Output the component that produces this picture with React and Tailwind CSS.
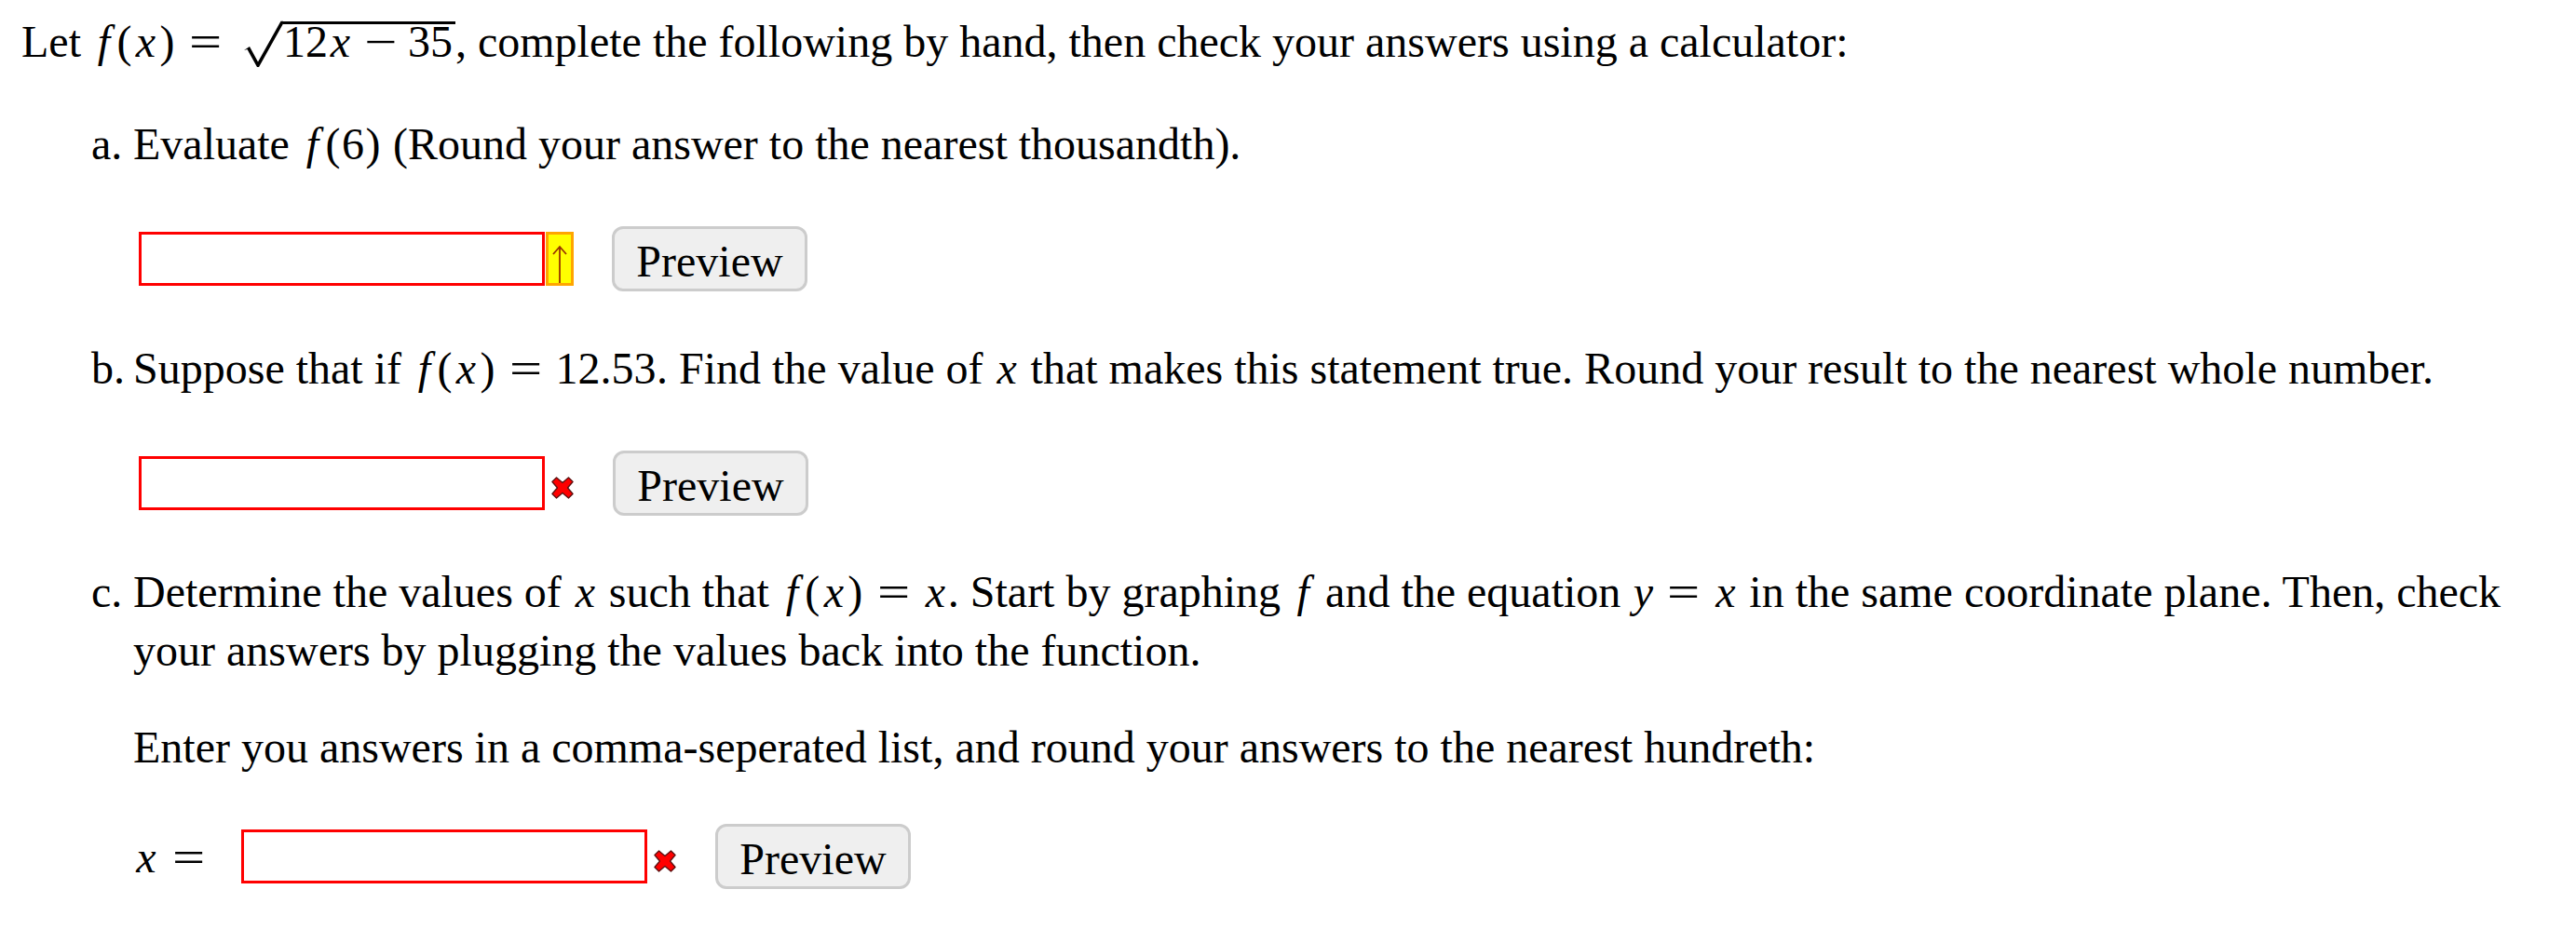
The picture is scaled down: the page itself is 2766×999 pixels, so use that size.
import React from "react";

// math pieces, sized to TeX glyph widths so the lines run as long as the reference
const Var = ({ children, w = "w-[27px]" }) => (
  <span className={`inline-block text-center italic ${w}`}>{children}</span>
);

const Up = ({ children, w }) => (
  <span className={`inline-block text-center ${w}`}>{children}</span>
);

const Eq = () => (
  <span className="inline-block w-[37px] mx-[13px] text-center scale-x-[1.3]">=</span>
);

const Fx = ({ arg }) => (
  <>
    <Var w="w-[25px]">f</Var>
    <Up w="w-[19px]">(</Up>
    {arg ? <Up w="w-[24px]">{arg}</Up> : <Var>x</Var>}
    <Up w="w-[19px]">)</Up>
  </>
);

const Sqrt = () => (
  <span className="whitespace-nowrap">
    <svg width="52" height="52" viewBox="0 0 52 52" className="inline-block align-[-11px]">
      <path d="M10 34 L16 30 L25 46.5 L49.5 2.7 L52 2.7 L52 5.5 L26 52 L24 52 L13.5 33 Z" fill="black" />
    </svg>
    <span className="inline-block border-t-[3px] border-black leading-[38px] pr-[3px]">
      <Up w="w-[48px]">12</Up>
      <Var>x</Var>
      <span className="inline-block w-[37px] mx-[11px] text-center scale-x-[1.3]">−</span>
      <Up w="w-[48px]">35</Up>
    </span>
  </span>
);

const Preview = ({ ml = "ml-[41px]" }) => (
  <button
    className={`${ml} w-[210px] h-[70px] shrink-0 flex items-center justify-center pt-[4px] rounded-[12px] border-[3px] border-[#cccccc] bg-[#efefef] text-black`}
  >
    Preview
  </button>
);

const Answer = ({ ml = "ml-[6px]" }) => (
  <input
    type="text"
    className={`w-[436px] ${ml} h-[58px] shrink-0 border-[3px] border-[#ff0000] bg-white outline-none`}
  />
);

const Hint = () => (
  <div className="ml-[1px] w-[30px] h-[58px] shrink-0 bg-[#ffff00] border-[3px] border-[#ffa500]">
    <svg width="24" height="52" viewBox="0 0 24 52">
      <path d="M12 13 L12 52 M5 21 L12 13 L19 21" stroke="#993300" strokeWidth="1.8" fill="none" />
    </svg>
  </div>
);

const Wrong = () => (
  <svg width="24" height="24" viewBox="-1 -1 26 26" className="ml-[7px] mt-[9px] shrink-0">
    <path
      d="M5 0 L12 6 L19 0 L24 5 L18 12 L24 19 L19 24 L12 18 L5 24 L0 19 L6 12 L0 5 Z"
      fill="#ff0000"
      stroke="#5a1010"
      strokeWidth="1.4"
      strokeLinejoin="round"
    />
  </svg>
);

export default function App() {
  return (
    <div className="min-h-screen bg-white text-black font-['Liberation_Serif',serif] text-[48px] leading-[63px] pt-[13px] px-[23px] whitespace-nowrap">
      <div>
        Let <Fx />
        <Eq />
        <Sqrt />, complete the following by hand, then check your answers using a calculator:
      </div>

      {/* a */}
      <div className="mt-[47px] ml-[75px] flex">
        <span className="w-[45px] shrink-0">a.</span>
        <div>
          <div>
            Evaluate <Fx arg="6" /> (Round your answer to the nearest thousandth).
          </div>
          <div className="mt-[57px] flex items-center h-[70px]">
            <Answer />
            <Hint />
            <Preview />
          </div>
        </div>
      </div>

      {/* b */}
      <div className="mt-[51px] ml-[75px] flex">
        <span className="w-[45px] shrink-0">b.</span>
        <div>
          <div>
            Suppose that if <Fx />
            <Eq />
            <Up w="w-[109px]">12.53</Up>. Find the value of <Var>x</Var> that makes this statement true. Round your
            result to the nearest whole number.
          </div>
          <div className="mt-[57px] flex items-center h-[70px]">
            <Answer />
            <Wrong />
            <Preview ml="ml-[42px]" />
          </div>
        </div>
      </div>

      {/* c */}
      <div className="mt-[50px] ml-[75px] flex">
        <span className="w-[45px] shrink-0">c.</span>
        <div>
          <div>
            Determine the values of <Var>x</Var> such that <Fx />
            <Eq />
            <Var>x</Var>. Start by graphing <Var w="w-[24px]">f</Var> and the equation <Var w="w-[24px]">y</Var>
            <Eq />
            <Var>x</Var> in the same coordinate plane. Then, check
            <br />
            your answers by plugging the values back into the function.
          </div>
          <div className="mt-[41px]">
            Enter you answers in a comma-seperated list, and round your answers to the nearest hundreth:
          </div>
          <div className="mt-[51px] flex items-center h-[70px]">
            <span className="whitespace-nowrap">
              <Var w="w-[28px]">x</Var>
              <Eq />
            </span>
            <Answer ml="ml-[25px]" />
            <Wrong />
            <Preview ml="ml-[42px]" />
          </div>
        </div>
      </div>
    </div>
  );
}
